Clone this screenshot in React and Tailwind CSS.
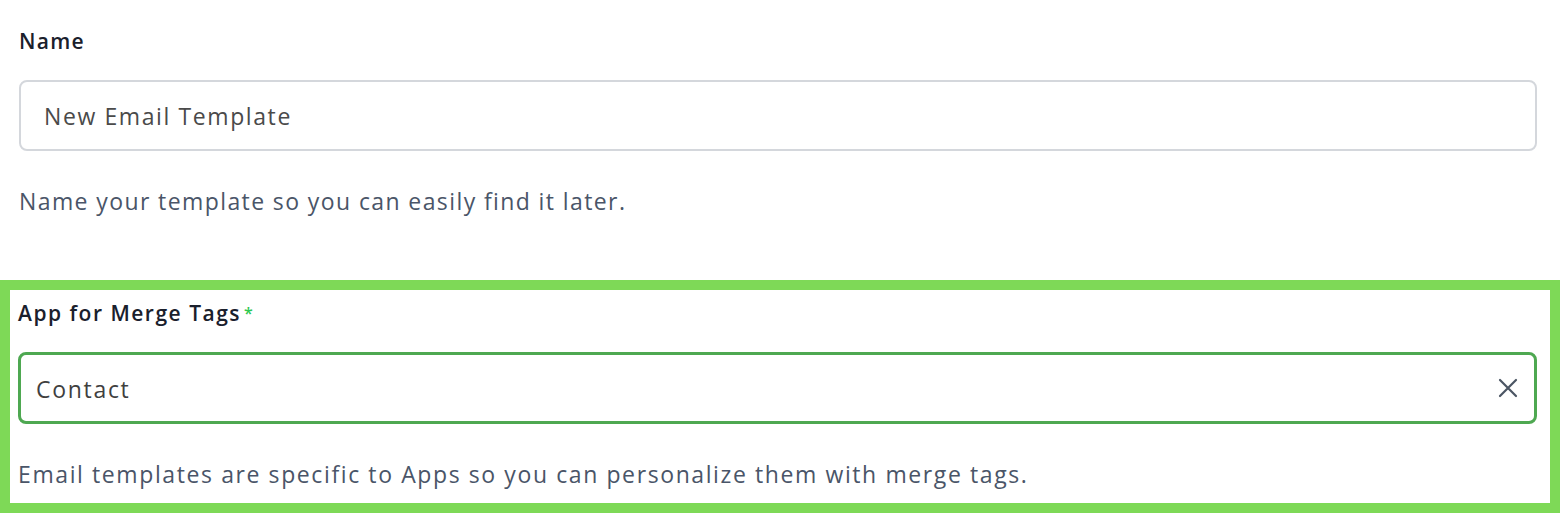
import React from "react";

export default function App() {
  return (
    <div
      className="w-[1560px] h-[514px] bg-white overflow-hidden"
      style={{ fontFamily: "'Open Sans', 'Liberation Sans', sans-serif" }}
    >
      {/* Name field */}
      <div className="px-[19px] pt-[26px]">
        <label className="block text-[21px] leading-[30px] font-semibold tracking-[1.3px] text-[#1a202c]">
          Name
        </label>
        <div className="mt-[24px] w-[1518px] h-[71px] rounded-[8px] border-2 border-[#d4d7dc] flex items-center px-[23px]">
          <span className="text-[23px] tracking-[1.6px] text-[#4a4a4a] pt-[2px]">New Email Template</span>
        </div>
        <p className="mt-[34px] text-[23px] leading-[32px] tracking-[1.4px] text-[#4a5568]">
          Name your template so you can easily find it later.
        </p>
      </div>

      {/* App for Merge Tags field, highlighted */}
      <div className="mt-[63px] h-[233px] border-[10px] border-[#7ed957] pl-[8px] pr-[12px]">
        <label className="block pt-[8px] text-[21px] leading-[30px] font-semibold tracking-[1.5px] text-[#1a202c]">
          App for Merge Tags
          <span className="ml-[3px] align-top text-[16px] text-[#2ec850]">*</span>
        </label>
        <div className="mt-[24px] w-[1519px] h-[72px] rounded-[8px] border-[3px] border-[#4ea851] flex items-center justify-between pl-[15px] pr-[16px]">
          <span className="text-[23px] tracking-[1.7px] text-[#3f3f3f] pt-[2px]">Contact</span>
          <svg width="20" height="20" viewBox="0 0 20 20" fill="none">
            <path d="M2 2 L18 18 M18 2 L2 18" stroke="#4b5563" strokeWidth="2.2" strokeLinecap="round" />
          </svg>
        </div>
        <p className="mt-[34px] text-[23px] leading-[32px] tracking-[1.6px] text-[#4a5568]">
          Email templates are specific to Apps so you can personalize them with merge tags.
        </p>
      </div>
    </div>
  );
}
